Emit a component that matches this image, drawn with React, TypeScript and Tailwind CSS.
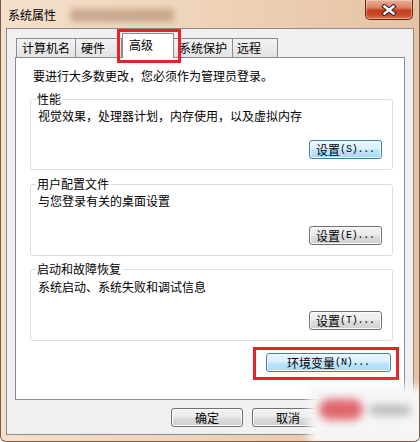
import React from "react";

const grayBtn =
  "flex items-center justify-center h-[19px] rounded-[3px] border border-[#707070] bg-[linear-gradient(to_bottom,#f2f2f2_0%,#ebebeb_48%,#dddddd_52%,#cfcfcf_100%)] shadow-[inset_0_0_0_1px_#fbfbfb] text-[12px] leading-[14px] text-black";
const blueBtn =
  "flex items-center justify-center h-[19px] rounded-[3px] border border-[#3c7fb1] bg-[linear-gradient(to_bottom,#eaf6fd_0%,#d9f0fc_48%,#bee6fd_52%,#a7d9f5_100%)] shadow-[inset_0_0_0_1px_#f4fbff] text-[12px] leading-[14px] text-black";

function Label({ cjk, key2 }: { cjk: string; key2: string }) {
  return (
    <span className="flex items-center">
      <span>{cjk}</span>
      <span className="font-['Liberation_Mono',monospace] text-[10px] tracking-[-0.2px]">({key2})...</span>
    </span>
  );
}

function Group({
  title,
  desc,
  btnKey,
  h,
  pt,
  pb,
  mt,
  blue,
}: {
  title: string;
  desc: string;
  btnKey: string;
  h: string;
  pt: string;
  pb: string;
  mt: string;
  blue?: boolean;
}) {
  return (
    <div className={`relative ml-[14px] mr-[11px] ${mt} ${h} border border-[#d5dfe5] rounded-[3px] flex flex-col justify-between pl-[7px] pr-[10px] ${pt} ${pb}`}>
      <span className="absolute left-[5px] -top-[8px] bg-white px-[1px] text-[12px] leading-[14px]">{title}</span>
      <div className="text-[12px] leading-[14px]">{desc}</div>
      <div className="flex justify-end">
        <button type="button" className={`${blue ? blueBtn : grayBtn} w-[73px]`}>
          <Label cjk="设置" key2={btnKey} />
        </button>
      </div>
    </div>
  );
}

export default function App() {
  return (
    <div className="relative w-[420px] h-[442px] overflow-hidden flex flex-col border-x border-b border-[#7a5a44] rounded-b-[6px] bg-[linear-gradient(to_right,#f4e0cc,#eed3b9_50%,#e6c2a2)] font-['Noto_Sans_CJK_SC','Liberation_Sans',sans-serif] text-black">
      {/* title bar */}
      <div className="h-[28px] flex items-start justify-between shrink-0">
        <div className="flex items-start pl-[7px] pt-[8px]">
          <span className="text-[12px] leading-[14px]">系统属性</span>
          <div className="ml-[14px] mt-[1px] w-[104px] h-[13px] rounded-[4px] bg-[#c09c82] opacity-80 blur-[3px]" />
        </div>
        <div className="mr-[6px] w-[48px] h-[20px] rounded-b-[5px] border border-t-0 border-[#5b2b20] bg-[linear-gradient(to_bottom,#eab09c_0%,#dc8266_40%,#c4401f_55%,#c84a28_80%,#dc7a52_100%)] shadow-[inset_0_0_0_1px_rgba(255,220,200,0.45)] flex items-center justify-center">
          <svg width="16" height="12" viewBox="0 0 16 12">
            <path d="M3.5 2.5 L12.5 9.5 M12.5 2.5 L3.5 9.5" stroke="#3a2626" strokeWidth="4.6" strokeLinecap="square" />
            <path d="M3.5 2.5 L12.5 9.5 M12.5 2.5 L3.5 9.5" stroke="#ffffff" strokeWidth="2.4" strokeLinecap="square" />
          </svg>
        </div>
      </div>

      {/* client */}
      <div className="ml-[5px] mr-[5px] mb-[6px] flex-1 border border-[#8a8a8a] bg-[#f0f0f0] flex flex-col pl-[8px] pr-[8px]">
        {/* tabs */}
        <div className="h-[28px] flex items-end pl-[1px] shrink-0">
          <div className="w-[60px] h-[19px] border border-b-0 border-[#898c95] bg-[linear-gradient(to_bottom,#f3f3f3,#e3e3e3)] pl-[5px] text-[12px] leading-[18px]">计算机名</div>
          <div className="w-[46px] h-[19px] border border-b-0 border-l-0 border-[#898c95] bg-[linear-gradient(to_bottom,#f3f3f3,#e3e3e3)] pl-[5px] text-[12px] leading-[18px]">硬件</div>
          <div className="relative z-10 w-[52px] h-[25px] -mb-px border border-b-0 border-[#898c95] bg-white pl-[6px] pt-[4px] text-[12px] leading-[14px]">
            高级
            <div className="absolute -left-[6px] -top-[5px] -right-[8px] -bottom-[5px] border-[3px] border-[#e52329]" />
          </div>
          <div className="w-[59px] h-[19px] border border-b-0 border-l-0 border-[#898c95] bg-[linear-gradient(to_bottom,#f3f3f3,#e3e3e3)] pl-[5px] text-[12px] leading-[18px]">系统保护</div>
          <div className="w-[45px] h-[19px] border border-b-0 border-l-0 border-[#898c95] bg-[linear-gradient(to_bottom,#f3f3f3,#e3e3e3)] pl-[4px] text-[12px] leading-[18px]">远程</div>
        </div>

        {/* pane */}
        <div className="h-[343px] shrink-0 border border-[#898c95] bg-white flex flex-col pt-[11px]">
          <div className="pl-[17px] text-[12px] leading-[14px]">要进行大多数更改，您必须作为管理员登录。</div>
          <Group title="性能" desc="视觉效果，处理器计划，内存使用，以及虚拟内存" btnKey="S" h="h-[71px]" mt="mt-[16px]" pt="pt-[9px]" pb="pb-[10px]" blue />
          <Group title="用户配置文件" desc="与您登录有关的桌面设置" btnKey="E" h="h-[72px]" mt="mt-[14px]" pt="pt-[9px]" pb="pb-[10px]" />
          <Group title="启动和故障恢复" desc="系统启动、系统失败和调试信息" btnKey="T" h="h-[72px]" mt="mt-[13px]" pt="pt-[10px]" pb="pb-[10px]" />
          <div className="flex justify-end mt-[12px] mr-[13px]">
            <div className="relative">
              <button type="button" className={`${blueBtn} w-[125px]`}>
                <Label cjk="环境变量" key2="N" />
              </button>
              <div className="absolute -left-[13px] -top-[6px] -right-[8px] -bottom-[8px] border-[3px] border-[#e52329]" />
            </div>
          </div>
        </div>

        {/* bottom buttons */}
        <div className="mt-[8px] flex justify-end gap-[9px]">
          <button type="button" className={`${grayBtn} w-[72px]`}>确定</button>
          <button type="button" className={`${grayBtn} w-[72px]`}>取消</button>
          <button type="button" className={`${grayBtn} w-[72px]`}>应用(A)</button>
        </div>
      </div>

      {/* watermark blur overlay */}
      <div className="absolute left-[308px] top-[386px] w-[130px] h-[62px] bg-[#f6f6f6] blur-[5px]" />
      <div className="absolute left-[318px] top-[399px] w-[44px] h-[21px] rounded-full bg-[#e0666d] blur-[4px]" />
      <div className="absolute left-[368px] top-[405px] w-[42px] h-[10px] rounded-full bg-[#8f8f8f] opacity-60 blur-[4px]" />
    </div>
  );
}
